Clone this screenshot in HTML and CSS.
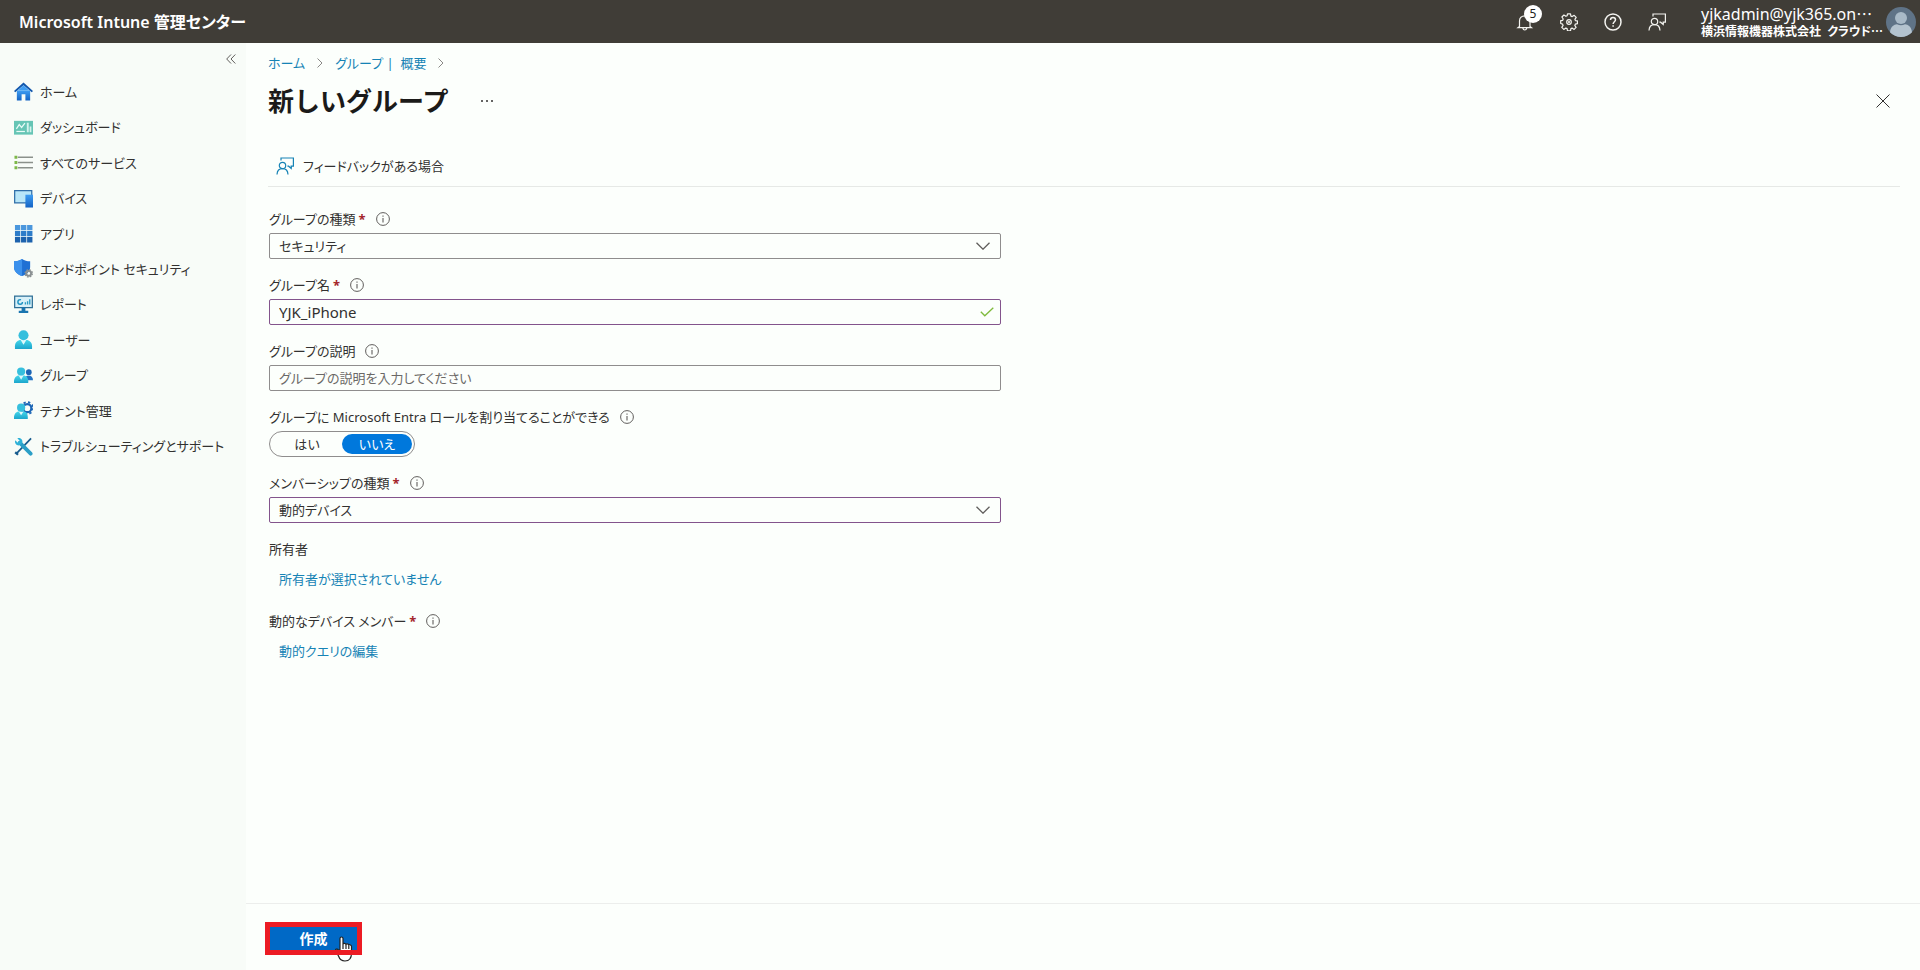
FILE: index.html
```html
<!DOCTYPE html>
<html lang="ja">
  <head>
    <meta charset="UTF-8" />
    <meta name="viewport" content="width=device-width, initial-scale=1.0" />
    <title>新しいグループ - Microsoft Intune 管理センター</title>
    <link rel="stylesheet" href="styles.css">
  </head>
  <body>
    <!-- アイコン定義 -->
    <svg class="defs" width="0" height="0" aria-hidden="true">
      <defs>
        <linearGradient id="blue" x1="0" y1="0" x2="0" y2="1"><stop offset="0" stop-color="#3f9df2"/><stop offset="1" stop-color="#1463c4"/></linearGradient>
        <linearGradient id="cyan" x1="0" y1="0" x2="0" y2="1"><stop offset="0" stop-color="#45d6ea"/><stop offset="1" stop-color="#1ba5cc"/></linearGradient>
      </defs>
      <symbol id="feedback" viewBox="0 0 18 18">
        <g fill="none" stroke="currentColor" stroke-width="1.2">
          <circle cx="6.5" cy="8.5" r="3.2"/>
          <path d="M1 17.5c.2-3.600 2.300-5.800 5.500-5.800s5.300 2.200 5.500 5.800M5 3.500V1h12.400v8.200h-2.200v2.300l-2.600-2.300h-1.200"/>
        </g>
      </symbol>
      <symbol id="info" viewBox="0 0 14 14">
        <circle cx="7" cy="7" r="6.400" fill="none" stroke="currentColor"/>
        <path d="M7 6v4.500M7 3.500v1.300" stroke="currentColor" stroke-width="1.100"/>
      </symbol>
      <symbol id="chevron" viewBox="0 0 14 8">
        <path d="M.5.700 7 7.200 13.500.700" fill="none" stroke="currentColor" stroke-width="1.300"/>
      </symbol>
    </svg>

    <header class="topbar">
      <a class="brand" href="#">Microsoft Intune 管理センター</a>
      <div class="tools">
        <button class="tool" type="button" aria-label="通知">
          <svg width="18" height="18" viewBox="0 0 18 18" fill="none" stroke="currentColor" stroke-width="1.200"><path d="M3.500 13.500V8c0-3 2.200-5.200 5.300-5.200S14 5 14 8v5.500l1.500 1.200H2zM6.800 15c.3 1.400 1 2 2 2s1.700-.6 2-2"/></svg>
          <span class="badge">5</span>
        </button>
        <button class="tool" type="button" aria-label="設定">
          <svg width="18" height="18" viewBox="0 0 18 18" fill="none" stroke="currentColor" stroke-width="1.200" stroke-linejoin="round"><path d="M7.500.800h3l.4 2.300 1.300.5 2-1.300 2 2-1.300 2 .5 1.300 2 .3v2.800l-2 .4-.6 1.300 1.300 2-2 2-2-1.300-1.200.5-.4 2.200h-3l-.4-2.200-1.300-.5-2 1.300-2-2 1.300-2-.5-1.300L.700 10.500V7.700l2-.4.5-1.300-1.300-2 2-2 2 1.300 1.200-.5z"/><circle cx="9" cy="9" r="2.300"/><circle cx="9" cy="9" r=".5"/></svg>
        </button>
        <button class="tool" type="button" aria-label="ヘルプ">
          <svg width="18" height="18" viewBox="0 0 18 18" fill="none" stroke="currentColor" stroke-width="1.500"><circle cx="9" cy="9" r="8"/><path d="M6.500 7c0-1.600 1-2.500 2.500-2.500s2.500.9 2.500 2.300c0 1.900-2.400 2-2.400 4.200M9.100 12.300v1.500"/></svg>
        </button>
        <button class="tool" type="button" aria-label="フィードバック">
          <svg width="18" height="18"><use href="#feedback"/></svg>
        </button>
        <a class="account" href="#">
          <span class="account_text">
            <span class="mail">yjkadmin@yjk365.on<span class="dots">…</span></span>
            <span class="tenant">横浜情報機器株式会社&nbsp; クラウド<span class="dots">…</span></span>
          </span>
          <svg class="avatar" width="30" height="30" viewBox="0 0 30 30"><circle cx="15" cy="15" r="15" fill="#5f7387"/><circle cx="15" cy="11" r="6" fill="#a9bac8"/><path d="M4 25.200C4.500 20 8 17.300 11 17.300c2.500 1.200 5.500 1.200 8 0 3 0 6.500 2.700 7 7.900a15 15 0 0 1-22 0z" fill="#b4c3cf"/></svg>
        </a>
      </div>
    </header>

    <div class="layout">
      <nav class="sidebar" aria-label="メイン メニュー">
        <button class="collapse" type="button" aria-label="折りたたむ">
          <svg width="10" height="10" viewBox="0 0 10 10" fill="none" stroke="currentColor"><path d="M5 .500.700 5 5 9.500M9.300.500 5 5l4.300 4.500"/></svg>
        </button>
        <ul class="menu">
          <li><a href="#"><svg viewBox="0 0 20 20"><path d="M3 9h14v10.500h-5V13H8v6.500H3z" fill="url(#blue)"/><path d="M10 .500 20 9.500l-1.300 1.300L10 3.500l-8.700 7.300L0 9.500z" fill="#1257ad"/><path d="M10 3.500 16 9H4z" fill="#3f9df2"/></svg>ホーム</a></li>
          <li><a href="#"><svg viewBox="0 0 20 20"><path d="M0 3h20v14.500H0z" fill="#66c5b5"/><path d="M2.500 11.500 5.500 7l2.500 3 3.500-4.500" fill="none" stroke="#e9fbf7" stroke-width="1.300"/><path d="M2.500 14.200h9" stroke="#e9fbf7" stroke-width="1.300"/><path d="M13.500 5h2v10h-2zM16.500 9h1.800v6h-1.800z" fill="#d4f3ed"/></svg>ダッシュボード</a></li>
          <li><a href="#"><svg viewBox="0 0 20 20"><path d="M4 4.500h16M4 10h16M4 15.500h16" stroke="#8b918b" stroke-width="1.500"/><path d="M.500 3h3v3h-3zM.500 8.500h3v3h-3zM.500 14h3v3h-3z" fill="#7eb84a"/></svg>すべてのサービス</a></li>
          <li><a href="#"><svg viewBox="0 0 20 20"><path d="M.700 1.700h18v13H.700z" fill="#b9e6f8" stroke="#2f6da8" stroke-width="1.300"/><path d="M12 6h8v13.500h-8z" fill="url(#blue)"/></svg>デバイス</a></li>
          <li><a href="#"><svg viewBox="0 0 20 20"><path d="M1 1h5.600v5.600H1zM7.400 1H13v5.600H7.400zM13.800 1h5.600v5.600h-5.600z" fill="#4b97dd"/><path d="M1 7.400h5.600V13H1zM7.400 7.400H13V13H7.400zM13.800 7.400h5.600V13h-5.600z" fill="#2d7cc9"/><path d="M1 13.800h5.600v5.600H1zM7.400 13.800H13v5.600H7.400zM13.800 13.800h5.600v5.600h-5.600z" fill="#1d62ad"/></svg>アプリ</a></li>
          <li><a href="#"><svg viewBox="0 0 20 20"><path d="M8.500 0C11 1.800 13.800 2.400 17 2.400v6.100c0 5-4 8-8.500 9.500C4 16.500 0 13.500 0 8.500V2.400C3.200 2.400 6 1.800 8.500 0z" fill="#1f70d4"/><path d="M8.500 0v18C4 16.500 0 13.500 0 8.500V2.400C3.200 2.400 6 1.800 8.500 0z" fill="#3c91ec"/><circle cx="15.500" cy="15.200" r="2.500" fill="none" stroke="#8a9092" stroke-width="2"/><circle cx="15.500" cy="15.200" r="3.800" fill="none" stroke="#8a9092" stroke-width="1.500" stroke-dasharray="1.700 1.300"/></svg>エンドポイント セキュリティ</a></li>
          <li><a href="#"><svg viewBox="0 0 20 20"><path d="M.700 1.200h18.600v12H.700z" fill="#d8f0f8" stroke="#2d6f96" stroke-width="1.300"/><path d="M8 13h4v3.500h3V19H5v-2.500h3z" fill="#1a75b0"/><circle cx="6.500" cy="7.300" r="2.400" fill="none" stroke="#1c91c2" stroke-width="1.500" stroke-dasharray="11 4"/><path d="M12 10V7.500M14.300 10V6.500M16.600 10V4.500" stroke="#2b9bc4" stroke-width="1.400"/></svg>レポート</a></li>
          <li><a href="#"><svg viewBox="0 0 20 20"><path d="M1 20v-3c0-4 3-6.500 6-6.500h6c3 0 6 2.500 6 6.500v3z" fill="url(#cyan)"/><path d="m7 10.500 3 5 3-5z" fill="#dff8fb"/><circle cx="10" cy="5.500" r="5.300" fill="#36bfdd"/></svg>ユーザー</a></li>
          <li><a href="#"><svg viewBox="0 0 20 20"><circle cx="15.600" cy="6.500" r="3" fill="#1b65b5"/><path d="M11 15c0-3 2-5 4.500-5s4.500 2 4.500 5z" fill="#2272c3"/><path d="M0 18v-2c0-3.500 2.500-6 5-6h5c3 0 5 2.500 5 6v2z" fill="url(#cyan)"/><path d="m5 10 2.500 4.500L10 10z" fill="#dff8fb"/><circle cx="7.500" cy="5.800" r="4.300" fill="#36bfdd"/></svg>グループ</a></li>
          <li><a href="#"><svg viewBox="0 0 20 20"><circle cx="14" cy="7.500" r="4.300" fill="none" stroke="#1b65b5" stroke-width="2.400"/><circle cx="14" cy="7.500" r="6.200" fill="none" stroke="#1b65b5" stroke-width="2" stroke-dasharray="2.400 2.470"/><path d="M0 19v-2c0-3.500 2.500-6 5-6h5c3 0 4.500 2.500 4.500 6v2z" fill="url(#cyan)"/><path d="m5 11 2.500 4 2.500-4z" fill="#dff8fb"/><circle cx="7.500" cy="7" r="4.300" fill="#36bfdd"/></svg>テナント管理</a></li>
          <li><a href="#"><svg viewBox="0 0 20 20"><path d="M18 1.500 2.500 17.500" stroke="#165a8d" stroke-width="1.800"/><path d="m2 15 3 3-1.500 1.500L.500 17z" fill="#165a8d"/><path d="M6 6l11.500 11.500" stroke="#2b9fc7" stroke-width="4" stroke-linecap="round"/><path d="M1.300 3.500 4 6l2-2L3.500 1.300C6 .300 9.500 2 8.800 5.800L6 8.800C2.500 9.300.300 6.500 1.300 3.500z" fill="#2fb2d8"/></svg>トラブルシューティングとサポート</a></li>
        </ul>
      </nav>

      <main class="blade">
        <div class="crumbs">
          <a href="#">ホーム</a>
          <svg width="6" height="10" viewBox="0 0 6 10"><path d="m.5.500 4.500 4.500L.500 9.500" fill="none" stroke="currentColor"/></svg>
          <a href="#">グループ | &nbsp;概要</a>
          <svg width="6" height="10" viewBox="0 0 6 10"><path d="m.5.500 4.500 4.500L.500 9.500" fill="none" stroke="currentColor"/></svg>
        </div>
        <div class="heading">
          <h1>新しいグループ</h1>
          <button class="plain more" type="button" aria-label="その他"><svg width="14" height="4" viewBox="0 0 14 4" fill="currentColor"><circle cx="2" cy="2" r="1"/><circle cx="7" cy="2" r="1"/><circle cx="12" cy="2" r="1"/></svg></button>
          <button class="plain close" type="button" aria-label="閉じる"><svg width="14" height="14" viewBox="0 0 14 14" fill="none" stroke="currentColor"><path d="m.5.500 13 13M13.500.500l-13 13"/></svg></button>
        </div>
        <div class="commands">
          <button class="plain command" type="button"><svg width="18" height="18"><use href="#feedback"/></svg>フィードバックがある場合</button>
        </div>

        <form class="form" id="group_form">
          <div class="field">
            <div class="caption"><label for="type">グループの種類</label><span class="required">*</span><svg class="info"><use href="#info"/></svg></div>
            <div class="control">
              <select id="type"><option>セキュリティ</option></select>
              <svg class="chevron"><use href="#chevron"/></svg>
            </div>
          </div>
          <div class="field">
            <div class="caption"><label for="name">グループ名</label><span class="required">*</span><svg class="info"><use href="#info"/></svg></div>
            <div class="control changed">
              <input class="latin" id="name" type="text" value="YJK_iPhone">
              <svg class="check" viewBox="0 0 14 10"><path d="m.8 4.800 4 4L13.300.700" fill="none" stroke="currentColor" stroke-width="1.300"/></svg>
            </div>
          </div>
          <div class="field">
            <div class="caption"><label for="desc">グループの説明</label><svg class="info"><use href="#info"/></svg></div>
            <div class="control">
              <input id="desc" type="text" placeholder="グループの説明を入力してください">
            </div>
          </div>
          <div class="field" role="radiogroup" aria-labelledby="role_label">
            <div class="caption"><span id="role_label">グループに Microsoft Entra ロールを割り当てることができる</span><svg class="info"><use href="#info"/></svg></div>
            <div class="toggle">
              <label><input type="radio" name="role"><span>はい</span></label>
              <label><input type="radio" name="role" checked><span>いいえ</span></label>
            </div>
          </div>
          <div class="field">
            <div class="caption"><label for="member">メンバーシップの種類</label><span class="required">*</span><svg class="info"><use href="#info"/></svg></div>
            <div class="control changed">
              <select id="member"><option>動的デバイス</option></select>
              <svg class="chevron"><use href="#chevron"/></svg>
            </div>
          </div>
          <div class="field">
            <div class="caption">所有者</div>
            <a class="pick" href="#">所有者が選択されていません</a>
          </div>
          <div class="field">
            <div class="caption">動的なデバイス メンバー<span class="required">*</span><svg class="info"><use href="#info"/></svg></div>
            <a class="pick" href="#">動的クエリの編集</a>
          </div>
        </form>

        <footer class="actions">
          <div class="highlight">
            <button class="create" type="submit" form="group_form">作成</button>
            <svg class="cursor" width="18" height="26" viewBox="0 0 18 26"><path d="M5 14V2.500C5 .500 8 .500 8 2.500V8c.5-1 2.500-1 3 .3.700-.8 2.300-.5 2.700.7 1-.7 2.800 0 2.800 1.500V17c0 4-1 8-6.500 8-4 0-5.500-2-6.500-5l-3-5c-.5-2 2-2.500 3-1z" fill="#fff" stroke="#222" stroke-width="1.200"/><path d="M8 8v5M11 8.500V13M13.800 9.500V13" stroke="#222" stroke-width="1.200"/></svg>
          </div>
        </footer>
      </main>
    </div>
  </body>
</html>
```
FILE: styles.css
```css
* {
  box-sizing: border-box;
}

body {
  display: flex;
  flex-direction: column;
  min-height: 100vh;
  margin: 0;
  background-color: #fcfffc;
  color: #323130;
  font-family: "Noto Sans", "Noto Sans CJK JP", sans-serif;
  font-size: 13px;
  font-feature-settings: "palt";
  line-height: 20px;
}

a {
  color: #1683b5;
  text-decoration: none;
}

button,
input,
select {
  font: inherit;
  font-feature-settings: inherit;
  color: inherit;
}

svg {
  flex: none;
}

.defs {
  position: absolute;
}

/* ヘッダー */
.topbar {
  display: flex;
  align-items: center;
  justify-content: space-between;
  height: 43px;
  padding: 0 4px 0 19px;
  background-color: #403d37;
  color: #ffffff;
}

.brand {
  color: #ffffff;
  font-size: 16px;
  font-weight: 600;
}

.tools {
  display: flex;
  align-items: center;
}

.tool {
  position: relative;
  display: flex;
  align-items: center;
  justify-content: center;
  width: 44px;
  height: 42px;
  padding: 0;
  border: 0;
  background: none;
  color: #f4f4f0;
}

.badge {
  position: absolute;
  top: 4px;
  left: 21px;
  width: 18px;
  height: 18px;
  border-radius: 50%;
  background-color: #ffffff;
  color: #222222;
  font-size: 12px;
  line-height: 18px;
  text-align: center;
}

.account {
  display: flex;
  align-items: center;
  gap: 8px;
  margin-left: 22px;
  color: #ffffff;
}

.account_text {
  display: flex;
  flex-direction: column;
  width: 177px;
  white-space: nowrap;
}

.mail {
  font-size: 16px;
  line-height: 18px;
}

.tenant {
  font-size: 12px;
  font-weight: 700;
  line-height: 16px;
}

.dots {
  font-family: "Noto Sans CJK JP", sans-serif;
}

/* 左メニュー */
.layout {
  display: flex;
  flex: 1;
}

.sidebar {
  display: flex;
  flex-direction: column;
  flex: none;
  width: 246px;
  background-color: #f8fcf8;
}

.collapse {
  display: flex;
  align-self: flex-end;
  margin: 11px 10px 0 0;
  padding: 0;
  border: 0;
  background: none;
  color: #605e5c;
}

.menu {
  display: grid;
  grid-auto-rows: 1fr;
  min-height: 390px;
  margin: 10px 0 0;
  padding: 0 0 0 14px;
  list-style: none;
}

.menu a {
  display: flex;
  align-items: center;
  gap: 7px;
  height: 100%;
  color: #323130;
}

.menu svg {
  width: 19px;
  height: 19px;
}

/* ブレード */
.blade {
  display: flex;
  flex: 1;
  flex-direction: column;
}

.crumbs {
  display: flex;
  align-items: center;
  gap: 12px;
  padding: 10px 22px 0;
  color: #8a8886;
}

.heading {
  display: flex;
  align-items: center;
  padding: 7px 30px 0 22px;
}

.heading h1 {
  margin: 0;
  color: #1b1a19;
  font-size: 26px;
  font-weight: 700;
  font-feature-settings: normal;
  line-height: 42px;
}

.plain {
  display: flex;
  align-items: center;
  padding: 0;
  border: 0;
  background: none;
}

.more {
  margin-left: 32px;
}

.close {
  margin-left: auto;
}

.commands {
  display: flex;
  margin: 26px 20px 0 22px;
  padding: 8px 8px 10px;
  border-bottom: 1px solid #e6e9e6;
}

.command {
  gap: 9px;
}

.command svg {
  color: #1683b5;
}

.form {
  width: 100%;
  max-width: 777px;
  padding: 22px 22px 22px 23px;
}

.field {
  margin-bottom: 16px;
}

.caption {
  display: flex;
  align-items: center;
  margin-bottom: 4px;
}

.required {
  margin-left: 3px;
  color: #a4262c;
  font-weight: 700;
}

.info {
  width: 14px;
  height: 14px;
  margin-left: 10px;
  color: #605e5c;
}

.control {
  display: grid;
  align-items: center;
}

.control > * {
  grid-area: 1 / 1;
}

.control input,
.control select {
  width: 100%;
  height: 26px;
  padding: 0 9px;
  border: 1px solid #8f8d8d;
  border-radius: 2px;
  outline: 0;
  background-color: transparent;
  appearance: none;
}

.control.changed input,
.control.changed select {
  border-color: #83548c;
}

.control .latin {
  font-size: 15px;
}

.control input::placeholder {
  color: #6b6967;
  opacity: 1;
}

.chevron,
.check {
  justify-self: end;
  width: 14px;
  height: 8px;
  margin-right: 11px;
  color: #605e5c;
  pointer-events: none;
}

.check {
  height: 10px;
  margin-right: 7px;
  color: #7fba3c;
}

.toggle {
  display: inline-flex;
  height: 26px;
  padding: 2px;
  border: 1px solid #8f8d8d;
  border-radius: 13px;
  vertical-align: top;
}

.toggle input {
  position: absolute;
  opacity: 0;
}

.toggle span {
  display: block;
  width: 70px;
  border-radius: 10px;
  text-align: center;
}

.toggle input:checked + span {
  background-color: #0078dc;
  color: #ffffff;
}

.pick {
  display: block;
  padding: 6px 10px;
}

/* フッター */
.actions {
  margin-top: auto;
  padding: 18px 19px 15px;
  border-top: 1px solid #eceeec;
}

.highlight {
  position: relative;
  width: 97px;
  padding: 5px;
}

/* 赤枠はカーソルより手前に描く */
.highlight::after {
  position: absolute;
  inset: 0;
  border: 5px solid #ec1c24;
  content: "";
  pointer-events: none;
}

.create {
  display: block;
  width: 100%;
  height: 23px;
  padding: 0;
  border: 0;
  background-color: #0069c6;
  color: #ffffff;
  font-size: 14px;
  font-weight: 600;
}

.cursor {
  position: absolute;
  top: 14px;
  left: 70px;
}
```
